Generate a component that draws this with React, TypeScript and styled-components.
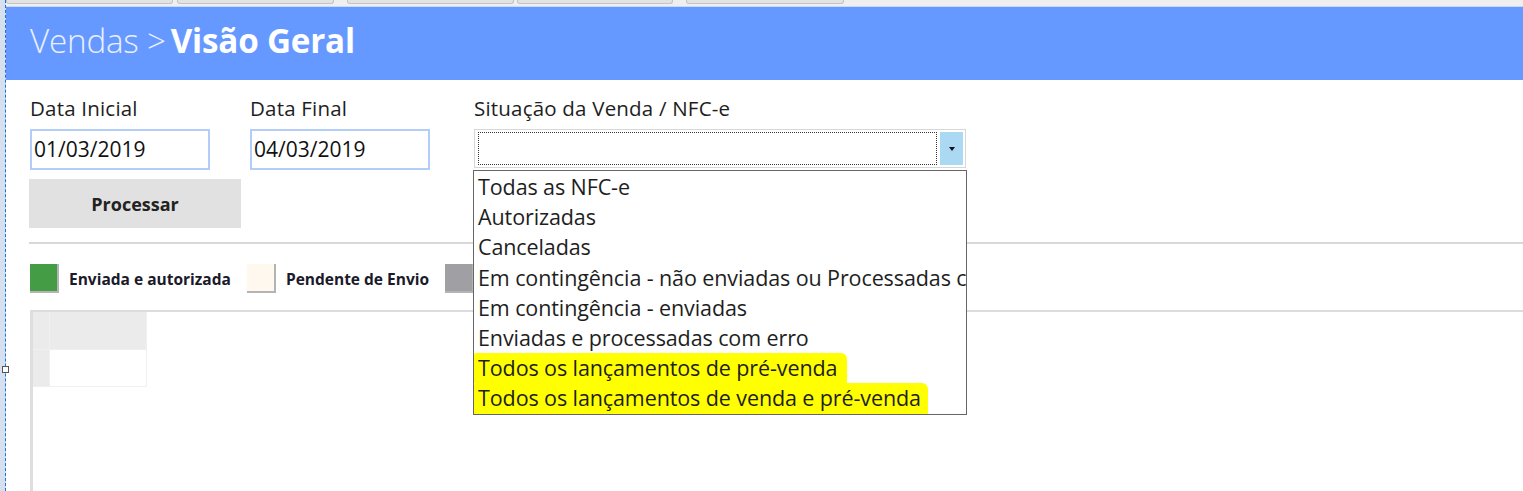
import * as React from 'react'
import styled, { createGlobalStyle } from 'styled-components'

const GlobalStyle = createGlobalStyle`
  html, body {
    margin: 0;
    padding: 0;
    background: #ffffff;
    font-family: 'Open Sans', 'Noto Sans', sans-serif;
    color: #1e1e1e;
  }
`

const Page = styled.div`
  display: flex;
  height: 491px;
  overflow: hidden;
`

const Gutter = styled.div`
  position: relative;
  width: 5px;
  flex: none;
  background: #d6e0ee;
  border-right: 1px dashed #1a72d2;
`

const Handle = styled.div`
  position: absolute;
  top: 366px;
  left: 2px;
  width: 5px;
  height: 5px;
  background: #fff;
  border: 1px solid #555;
`

const Main = styled.div`
  flex: 1;
  display: flex;
  flex-direction: column;
  min-width: 0;
`

const TabStrip = styled.div`
  height: 6px;
  background: #efefef;
  display: flex;
  align-items: flex-start;
`

const TabStub = styled.div<{ $left: number; $width: number }>`
  margin-left: ${(p) => p.$left}px;
  width: ${(p) => p.$width}px;
  height: 4px;
  box-sizing: border-box;
  background: #e3e3e3;
  border: 1px solid #c4c4c4;
  border-top: none;
  border-radius: 0 0 3px 3px;
`

const Header = styled.header`
  height: 74px;
  background: #6699ff;
  border-top: 1px solid #c9d9fb;
  box-sizing: border-box;
  display: flex;
  align-items: center;
  padding: 0 0 6px 24px;
  font-size: 33.2px;
  color: #ffffff;
  letter-spacing: -0.2px;
`

const Crumb = styled.span`
  font-weight: 300;
  color: #e9efff;
  margin-right: 5px;
`

const Title = styled.span`
  font-weight: 700;
`

const Content = styled.div`
  flex: 1;
  display: flex;
  flex-direction: column;
  padding-top: 15px;
  min-height: 0;
`

const Filters = styled.div`
  display: flex;
  align-items: flex-start;
  padding-left: 24px;
`

const Field = styled.div<{ $width: number; $gap: number }>`
  position: relative;
  width: ${(p) => p.$width}px;
  margin-left: ${(p) => p.$gap}px;
  display: flex;
  flex-direction: column;
`

const Label = styled.label`
  font-size: 20.5px;
  line-height: 26px;
  margin-bottom: 8px;
  color: #1e1e1e;
  white-space: nowrap;
  letter-spacing: 0.2px;
`

const Input = styled.div`
  height: 41px;
  box-sizing: border-box;
  border: 2px solid #b3cdfb;
  padding: 0 2px;
  font-size: 21px;
  line-height: 36px;
  color: #111;
`

const Combo = styled.div`
  height: 39px;
  box-sizing: border-box;
  border: 1px solid #d7d7d7;
  background: #fff;
  padding: 2px;
  display: flex;
  gap: 3px;
`

const FocusBox = styled.div`
  flex: 1;
  border: 1px dotted #333;
  margin-left: 1px;
`

const ArrowButton = styled.div`
  width: 23px;
  background: #abd9f3;
  display: flex;
  align-items: center;
  justify-content: center;
  &::after {
    content: '';
    border-left: 3px solid transparent;
    border-right: 3px solid transparent;
    border-top: 4px solid #111;
  }
`

const DropList = styled.ul`
  position: absolute;
  top: calc(100% + 2px);
  left: -1px;
  width: 494px;
  box-sizing: border-box;
  margin: 0;
  padding: 1px 0 0;
  list-style: none;
  background: #fff;
  border: 1px solid #666;
  z-index: 5;
`

const DropItem = styled.li`
  height: 30.2px;
  line-height: 30px;
  padding-left: 4px;
  font-size: 21.5px;
  letter-spacing: -0.1px;
  white-space: nowrap;
  overflow: hidden;
  color: #1e1e1e;
`

const Marker = styled.span<{ $tail: number }>`
  display: inline-block;
  margin-left: -4px;
  padding: 0 ${(p) => p.$tail}px 0 4px;
  background: #ffff00;
  border-radius: 2px 6px 4px 2px;
  box-shadow: 0 3px 0 #ffff00;
`

const ProcessButton = styled.button`
  margin: 9px 0 0 23px;
  width: 212px;
  height: 49px;
  border: none;
  background: #e1e1e1;
  font-family: inherit;
  font-size: 18px;
  font-weight: 700;
  color: #222;
  align-self: flex-start;
`

const Separator = styled.hr`
  margin: 14px 0 0 23px;
  border: none;
  height: 2px;
  background: #d9d9d9;
`

const Legend = styled.div`
  display: flex;
  align-items: center;
  margin: 20px 0 0 24px;
  height: 29px;
`

const Swatch = styled.div<{ $color: string }>`
  width: 29px;
  height: 29px;
  box-sizing: border-box;
  background: ${(p) => p.$color};
  border-right: 2px solid #b4b4b4;
  border-bottom: 2px solid #b4b4b4;
  margin-right: 10px;
`

const LegendText = styled.span`
  font-size: 15.5px;
  font-weight: 700;
  color: #1a1a2a;
  margin-right: 16px;
  white-space: nowrap;
`

const Grid = styled.div`
  flex: 1;
  margin: 17px 0 0 24px;
  border-top: 2px solid #dcdcdc;
  border-left: 3px solid #dedede;
  display: grid;
  grid-template-columns: 17px 97px;
  grid-template-rows: 38px 37px;
  align-content: start;
`

const Cell = styled.div<{ $head?: boolean }>`
  background: ${(p) => (p.$head ? '#ebebeb' : '#ffffff')};
  border-right: 1px solid #f0f0f0;
  border-bottom: 1px solid #f0f0f0;
`

const tabs = [
  { left: 0, width: 167 },
  { left: 4, width: 157 },
  { left: 13, width: 167 },
  { left: 3, width: 156 },
  { left: 13, width: 158 },
]

const options = [
  'Todas as NFC-e',
  'Autorizadas',
  'Canceladas',
  'Em contingência - não enviadas ou Processadas com erro',
  'Em contingência - enviadas',
  'Enviadas e processadas com erro',
]

const marked = [
  { text: 'Todos os lançamentos de pré-venda', tail: 10 },
  { text: 'Todos os lançamentos de venda e pré-venda', tail: 7 },
]

export default function App() {
  return (
    <>
      <GlobalStyle />
      <Page>
        <Gutter>
          <Handle />
        </Gutter>
        <Main>
          <TabStrip>
            {tabs.map((t, i) => (
              <TabStub key={i} $left={t.left} $width={t.width} />
            ))}
          </TabStrip>
          <Header>
            <Crumb>Vendas &gt;</Crumb>
            <Title>Visão Geral</Title>
          </Header>
          <Content>
            <Filters>
              <Field $width={180} $gap={0}>
                <Label>Data Inicial</Label>
                <Input>01/03/2019</Input>
              </Field>
              <Field $width={180} $gap={40}>
                <Label>Data Final</Label>
                <Input>04/03/2019</Input>
              </Field>
              <Field $width={492} $gap={44}>
                <Label>Situação da Venda / NFC-e</Label>
                <Combo>
                  <FocusBox />
                  <ArrowButton />
                </Combo>
                <DropList>
                  {options.map((o) => (
                    <DropItem key={o}>{o}</DropItem>
                  ))}
                  {marked.map((m) => (
                    <DropItem key={m.text}>
                      <Marker $tail={m.tail}>{m.text}</Marker>
                    </DropItem>
                  ))}
                </DropList>
              </Field>
            </Filters>
            <ProcessButton>Processar</ProcessButton>
            <Separator />
            <Legend>
              <Swatch $color="#449c45" />
              <LegendText>Enviada e autorizada</LegendText>
              <Swatch $color="#fff8ee" />
              <LegendText>Pendente de Envio</LegendText>
              <Swatch $color="#a0a0a4" />
            </Legend>
            <Grid>
              <Cell $head />
              <Cell $head />
              <Cell $head />
              <Cell />
            </Grid>
          </Content>
        </Main>
      </Page>
    </>
  )
}
